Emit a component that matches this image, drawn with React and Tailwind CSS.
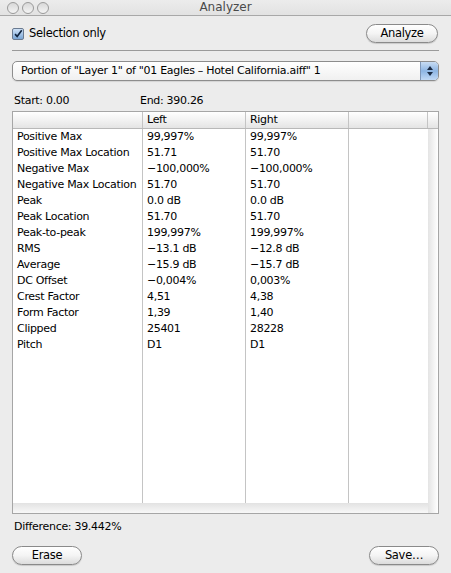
import { useState } from 'react'

const rows = [
  ['Positive Max', '99,997%', '99,997%'],
  ['Positive Max Location', '51.71', '51.70'],
  ['Negative Max', '\u2212100,000%', '\u2212100,000%'],
  ['Negative Max Location', '51.70', '51.70'],
  ['Peak', '0.0 dB', '0.0 dB'],
  ['Peak Location', '51.70', '51.70'],
  ['Peak-to-peak', '199,997%', '199,997%'],
  ['RMS', '\u221213.1 dB', '\u221212.8 dB'],
  ['Average', '\u221215.9 dB', '\u221215.7 dB'],
  ['DC Offset', '\u22120,004%', '0,003%'],
  ['Crest Factor', '4,51', '4,38'],
  ['Form Factor', '1,39', '1,40'],
  ['Clipped', '25401', '28228'],
  ['Pitch', 'D1', 'D1'],
]

function AquaButton({ children, className = '' }) {
  return (
    <button
      className={`h-[19px] rounded-full border border-[#8a8a8a] bg-gradient-to-b from-white via-[#f4f4f4] to-[#dcdcdc] text-[11.5px] text-black shadow-[0_1px_1px_rgba(0,0,0,0.15)] ${className}`}
    >
      {children}
    </button>
  )
}

function Light() {
  return <span className="h-[12px] w-[12px] rounded-full border border-[#9a9a9a] bg-gradient-to-b from-[#d8d8d8] to-[#f4f4f4]" />
}

function Column({ values, width, last }) {
  return (
    <div className={`flex flex-col ${width} ${last ? '' : 'border-r border-[#c4c4c4]'}`}>
      {values.map((v, i) => (
        <div key={i} className="h-[16px] truncate pl-[4px] leading-[16px]">
          {v}
        </div>
      ))}
    </div>
  )
}

export default function App() {
  const [only, setOnly] = useState(true)

  return (
    <div
      className="flex h-[573px] w-[451px] flex-col bg-[#ececec] text-[11px] tracking-[-0.3px] text-black"
      style={{ fontFamily: '"DejaVu Sans", "Liberation Sans", sans-serif' }}
    >
      {/* title bar */}
      <div className="grid h-[16px] grid-cols-[60px_1fr_60px] items-center border-b border-[#a8a8a8] bg-gradient-to-b from-[#ececec] to-[#e2e2e2]">
        <div className="flex gap-[3px] pl-[7px]">
          <Light />
          <Light />
          <Light />
        </div>
        <div className="text-center text-[12px] leading-[15px] tracking-normal text-[#4a4a4a]">Analyzer</div>
        <div />
      </div>

      <div className="flex flex-1 flex-col px-[12px]">
        <div className="mt-[8px] flex h-[19px] items-center justify-between">
          <label className="flex items-center gap-[5px]" onClick={() => setOnly(!only)}>
            <span className="flex h-[12px] w-[12px] items-center justify-center rounded-[2px] border border-[#6a7a90] bg-gradient-to-b from-[#cfe2f7] to-[#7aa6d6]">
              {only && (
                <svg viewBox="0 0 12 12" className="h-[12px] w-[12px]">
                  <path d="M2.5 6.2 L5 9 L10.5 1.5" fill="none" stroke="#10243f" strokeWidth="2" />
                </svg>
              )}
            </span>
            <span className="text-[11.5px]">Selection only</span>
          </label>
          <AquaButton className="mr-[1px] w-[72px]">Analyze</AquaButton>
        </div>

        <div className="mt-[7px] h-px bg-[#9a9a9a]" />

        {/* popup */}
        <div className="mt-[10px] flex h-[20px] items-center rounded-[5px] border border-[#8d8d8d] bg-gradient-to-b from-white to-[#f0f0f0] shadow-[0_1px_1px_rgba(0,0,0,0.1)]">
          <span className="flex-1 truncate pl-[8px] text-[11px]">
            Portion of "Layer 1" of "01 Eagles – Hotel California.aiff" 1
          </span>
          <span className="flex h-full w-[18px] flex-col items-center justify-center gap-[2px] rounded-r-[4px] border-l border-[#7f97b8] bg-gradient-to-b from-[#c8dcf3] via-[#8db5e3] to-[#c1d9f5]">
            <span className="h-0 w-0 border-x-[3px] border-b-[4px] border-x-transparent border-b-[#1b2b44]" />
            <span className="h-0 w-0 border-x-[3px] border-t-[4px] border-x-transparent border-t-[#1b2b44]" />
          </span>
        </div>

        <div className="mt-[12px] flex h-[16px] items-center pl-[2px]">
          <span className="w-[126px]">Start: 0.00</span>
          <span>End: 390.26</span>
        </div>

        {/* table */}
        <div className="mt-[2px] flex h-[403px] flex-col border border-[#a6a6a6] bg-white">
          <div className="flex h-[17px] border-b border-[#b8b8b8] bg-gradient-to-b from-white via-[#f2f2f2] to-[#e4e4e4] leading-[16px]">
            <div className="w-[130px] border-r border-[#c4c4c4]" />
            <div className="w-[103px] border-r border-[#c4c4c4] pl-[4px]">Left</div>
            <div className="w-[103px] border-r border-[#c4c4c4] pl-[4px]">Right</div>
            <div className="w-[79px] border-r border-[#c4c4c4]" />
            <div className="flex-1" />
          </div>
          <div className="flex flex-1">
            <div className="flex flex-1 flex-col">
              <div className="flex flex-1">
                <Column width="w-[130px]" values={rows.map((r) => r[0])} />
                <Column width="w-[103px]" values={rows.map((r) => r[1])} />
                <Column width="w-[103px]" values={rows.map((r) => r[2])} />
                <Column width="w-[79px]" values={[]} last />
              </div>
              <div className="h-[10px] bg-gradient-to-b from-[#e2e2e2] to-[#f8f8f8]" />
            </div>
            <div className="w-[11px] bg-gradient-to-r from-[#e4e4e4] to-white" />
          </div>
        </div>

        <div className="mt-[5px] flex h-[16px] items-center pl-[2px]">Difference: 39.442%</div>

        <div className="mt-[11px] flex items-center justify-between">
          <AquaButton className="w-[70px]">Erase</AquaButton>
          <AquaButton className="w-[70px]">Save…</AquaButton>
        </div>
      </div>
    </div>
  )
}
